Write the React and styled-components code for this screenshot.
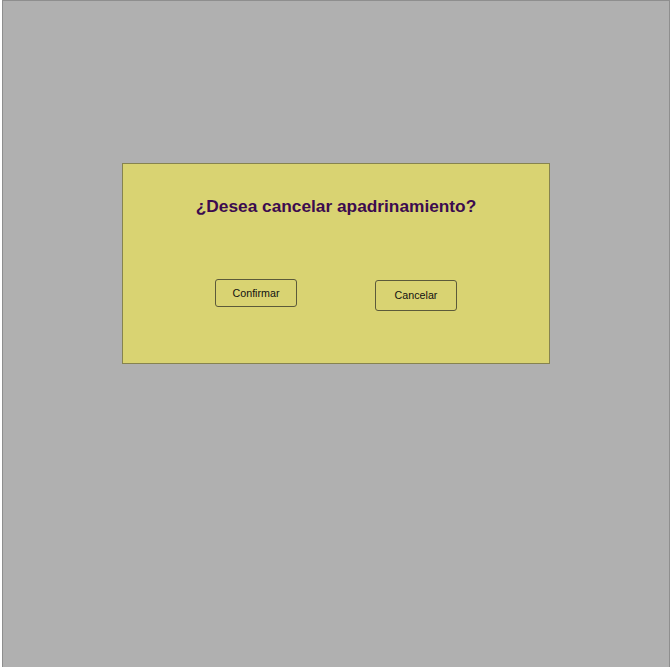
import React from "react";
import styled, { createGlobalStyle } from "styled-components";

const GlobalStyle = createGlobalStyle`
  html, body {
    margin: 0;
    padding: 0;
    background: #ffffff;
    overflow: hidden;
  }
  body {
    font-family: "Liberation Sans", Arial, sans-serif;
  }
`;

const Screen = styled.div`
  box-sizing: border-box;
  margin-left: 2px;
  width: 668px;
  height: 700px;
  background: #b0b0b0;
  border: 1px solid #8e8e8e;
  display: flex;
  justify-content: center;
  padding-top: 162px;
`;

const Dialog = styled.div`
  box-sizing: border-box;
  width: 428px;
  height: 201px;
  background: #d9d372;
  border: 1px solid #86834f;
  display: flex;
  flex-direction: column;
  align-items: center;
  padding-top: 30px;
`;

const Title = styled.h2`
  margin: 0;
  font-size: 17.3px;
  font-weight: bold;
  color: #3c0b4f;
  line-height: 24px;
`;

const Actions = styled.div`
  display: flex;
  align-items: flex-start;
  gap: 78px;
  margin-top: 61px;
`;

const Button = styled.button`
  box-sizing: border-box;
  width: ${(p) => p.$w}px;
  height: ${(p) => p.$h}px;
  margin-top: ${(p) => p.$top || 0}px;
  background: transparent;
  border: 1px solid #5c5a3a;
  border-radius: 3px;
  font-family: "Liberation Sans", Arial, sans-serif;
  font-size: 10.7px;
  color: #111;
  padding: 0 0 ${(p) => p.$pb || 0}px;
  cursor: pointer;
`;

export default function App() {
  return (
    <>
      <GlobalStyle />
      <Screen>
        <Dialog>
          <Title>¿Desea cancelar apadrinamiento?</Title>
          <Actions>
            <Button $w={82} $h={28}>Confirmar</Button>
            <Button $w={82} $h={31} $top={1} $pb={2}>Cancelar</Button>
          </Actions>
        </Dialog>
      </Screen>
    </>
  );
}
